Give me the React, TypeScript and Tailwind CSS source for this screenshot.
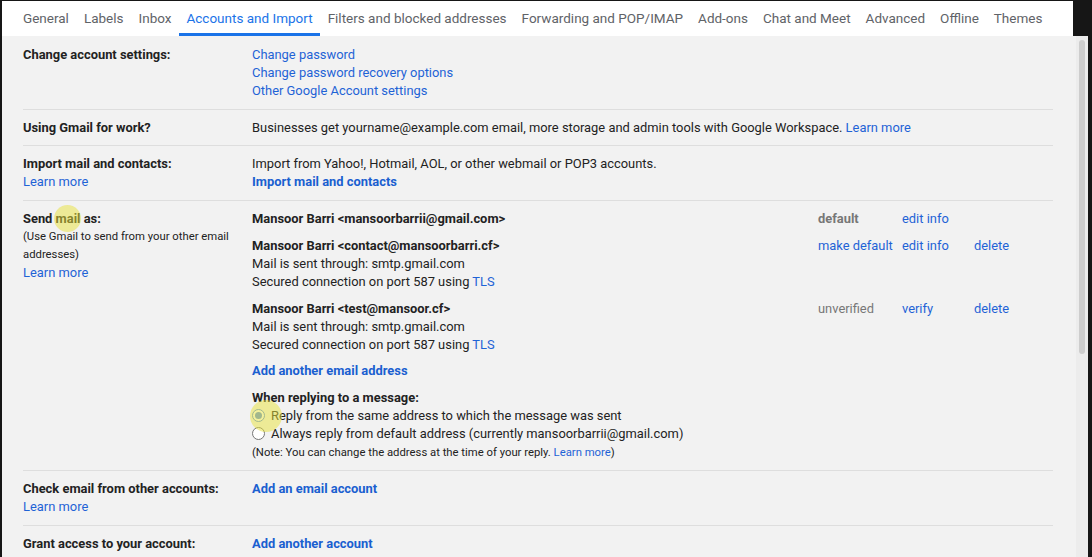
const tabs = [
  'General',
  'Labels',
  'Inbox',
  'Accounts and Import',
  'Filters and blocked addresses',
  'Forwarding and POP/IMAP',
  'Add-ons',
  'Chat and Meet',
  'Advanced',
  'Offline',
  'Themes',
]

function Link({ children, bold }: { children: React.ReactNode; bold?: boolean }) {
  return <span className={bold ? 'text-[#1a5fd0] font-bold cursor-pointer' : 'text-[#1f63d6] cursor-pointer'}>{children}</span>
}

function Row({ label, children, last }: { label: React.ReactNode; children: React.ReactNode; last?: boolean }) {
  return (
    <div className={last ? 'flex pt-[9px] pb-[8.5px]' : 'flex pt-[9px] pb-[8.5px] border-b border-[#dedede]'}>
      <div className="w-[229px] shrink-0 pr-3">{label}</div>
      <div className="flex-1">{children}</div>
    </div>
  )
}

function Radio({ checked }: { checked?: boolean }) {
  return (
    <span
      className={
        checked
          ? 'w-[13px] h-[13px] rounded-full border border-[#5b8de0] bg-white flex items-center justify-center shrink-0'
          : 'w-[13px] h-[13px] rounded-full border border-[#767676] bg-white shrink-0'
      }
    >
      {checked && <span className="w-[7px] h-[7px] rounded-full bg-[#5b8de0]" />}
    </span>
  )
}

function Account({ name, status, statusBold, statusLink, edit, del, lines, mb }: {
  name: string
  status?: string
  statusBold?: boolean
  statusLink?: boolean
  edit?: string
  del?: boolean
  lines?: boolean
  mb: string
}) {
  return (
    <div className={`flex ${mb}`}>
      <div className="w-[566px] shrink-0">
        <div className="font-bold">{name}</div>
        {lines && (
          <>
            <div>Mail is sent through: smtp.gmail.com</div>
            <div>Secured connection on port 587 using <Link>TLS</Link></div>
          </>
        )}
      </div>
      <div className="w-[84px] shrink-0">
        {status && (statusLink ? <Link>{status}</Link> : <span className={statusBold ? 'text-[#777] font-bold' : 'text-[#777]'}>{status}</span>)}
      </div>
      <div className="w-[72px] shrink-0">{edit && <Link>{edit}</Link>}</div>
      <div className="flex-1">{del && <Link>delete</Link>}</div>
    </div>
  )
}

export default function App() {
  return (
    <div className="w-[1092px] h-[557px] bg-[#161616] pl-[2px] pt-[1px] flex flex-col overflow-hidden text-[#222] text-[12.9px] leading-[18px] font-['Roboto',_'Liberation_Sans',_sans-serif]">
      <div className="flex h-[35px] shrink-0">
        <div className="w-[1071px] bg-white flex pl-[13.5px]">
          {tabs.map((t, i) => (
            <div
              key={t}
              className={
                i === 3
                  ? 'px-[7.5px] flex items-center border-t-[1px] border-b-[3px] border-t-transparent border-b-[#1a73e8] text-[#1a73e8] text-[13.5px] whitespace-nowrap'
                  : 'px-[7.5px] flex items-center border-t-[1px] border-b-[3px] border-transparent text-[#5f6368] text-[13.5px] whitespace-nowrap'
              }
            >
              {t}
            </div>
          ))}
        </div>
      </div>
      <div className="flex flex-1 min-h-0">
        <div className="relative w-[1074px] bg-[#f2f2f2] pl-[21px] pr-[23px] pt-[1px] overflow-hidden">
          <Row label={<div className="font-bold">Change account settings:</div>}>
            <div><Link>Change password</Link></div>
            <div><Link>Change password recovery options</Link></div>
            <div><Link>Other Google Account settings</Link></div>
          </Row>
          <Row label={<div className="font-bold">Using Gmail for work?</div>}>
            <div>
              Businesses get yourname@example.com email, more storage and admin tools with Google Workspace. <Link>Learn more</Link>
            </div>
          </Row>
          <Row
            label={
              <>
                <div className="font-bold">Import mail and contacts:</div>
                <Link>Learn more</Link>
              </>
            }
          >
            <div>Import from Yahoo!, Hotmail, AOL, or other webmail or POP3 accounts.</div>
            <Link bold>Import mail and contacts</Link>
          </Row>
          <Row
            label={
              <>
                <div className="font-bold">Send mail as:</div>
                <div className="text-[11.3px] leading-[18px]">(Use Gmail to send from your other email addresses)</div>
                <Link>Learn more</Link>
              </>
            }
          >
            <Account name="Mansoor Barri <mansoorbarrii@gmail.com>" status="default" statusBold edit="edit info" mb="mb-[9px]" />
            <Account name="Mansoor Barri <contact@mansoorbarri.cf>" status="make default" statusLink edit="edit info" del lines mb="mb-[9px]" />
            <Account name="Mansoor Barri <test@mansoor.cf>" status="unverified" edit="verify" del lines mb="mb-[8px]" />
            <div className="mb-[9px]"><Link bold>Add another email address</Link></div>
            <div className="font-bold">When replying to a message:</div>
            <div className="flex items-center gap-[6px]">
              <Radio checked />
              <span>Reply from the same address to which the message was sent</span>
            </div>
            <div className="flex items-center gap-[6px]">
              <Radio />
              <span>Always reply from default address (currently mansoorbarrii@gmail.com)</span>
            </div>
            <div className="text-[11.3px] leading-[18px] mt-[1px]">
              (Note: You can change the address at the time of your reply. <Link>Learn more</Link>)
            </div>
          </Row>
          <Row
            label={
              <>
                <div className="font-bold whitespace-nowrap">Check email from other accounts:</div>
                <Link>Learn more</Link>
              </>
            }
          >
            <Link bold>Add an email account</Link>
          </Row>
          <Row last label={<div className="font-bold whitespace-nowrap">Grant access to your account:</div>}>
            <Link bold>Add another account</Link>
          </Row>

          <span className="absolute left-[51.5px] top-[168.5px] w-[27px] h-[27px] rounded-full bg-[#e8e23a]/50 pointer-events-none" />
          <span className="absolute left-[248px] top-[364px] w-[32px] h-[32px] rounded-full bg-[#e8e23a]/50 pointer-events-none" />
        </div>
        <div className="w-[12px] bg-[#ececec] pt-[4px] pl-[3px]">
          <div className="w-[6px] h-[314px] rounded-full bg-[#cdcdcd]" />
        </div>
      </div>
    </div>
  )
}
